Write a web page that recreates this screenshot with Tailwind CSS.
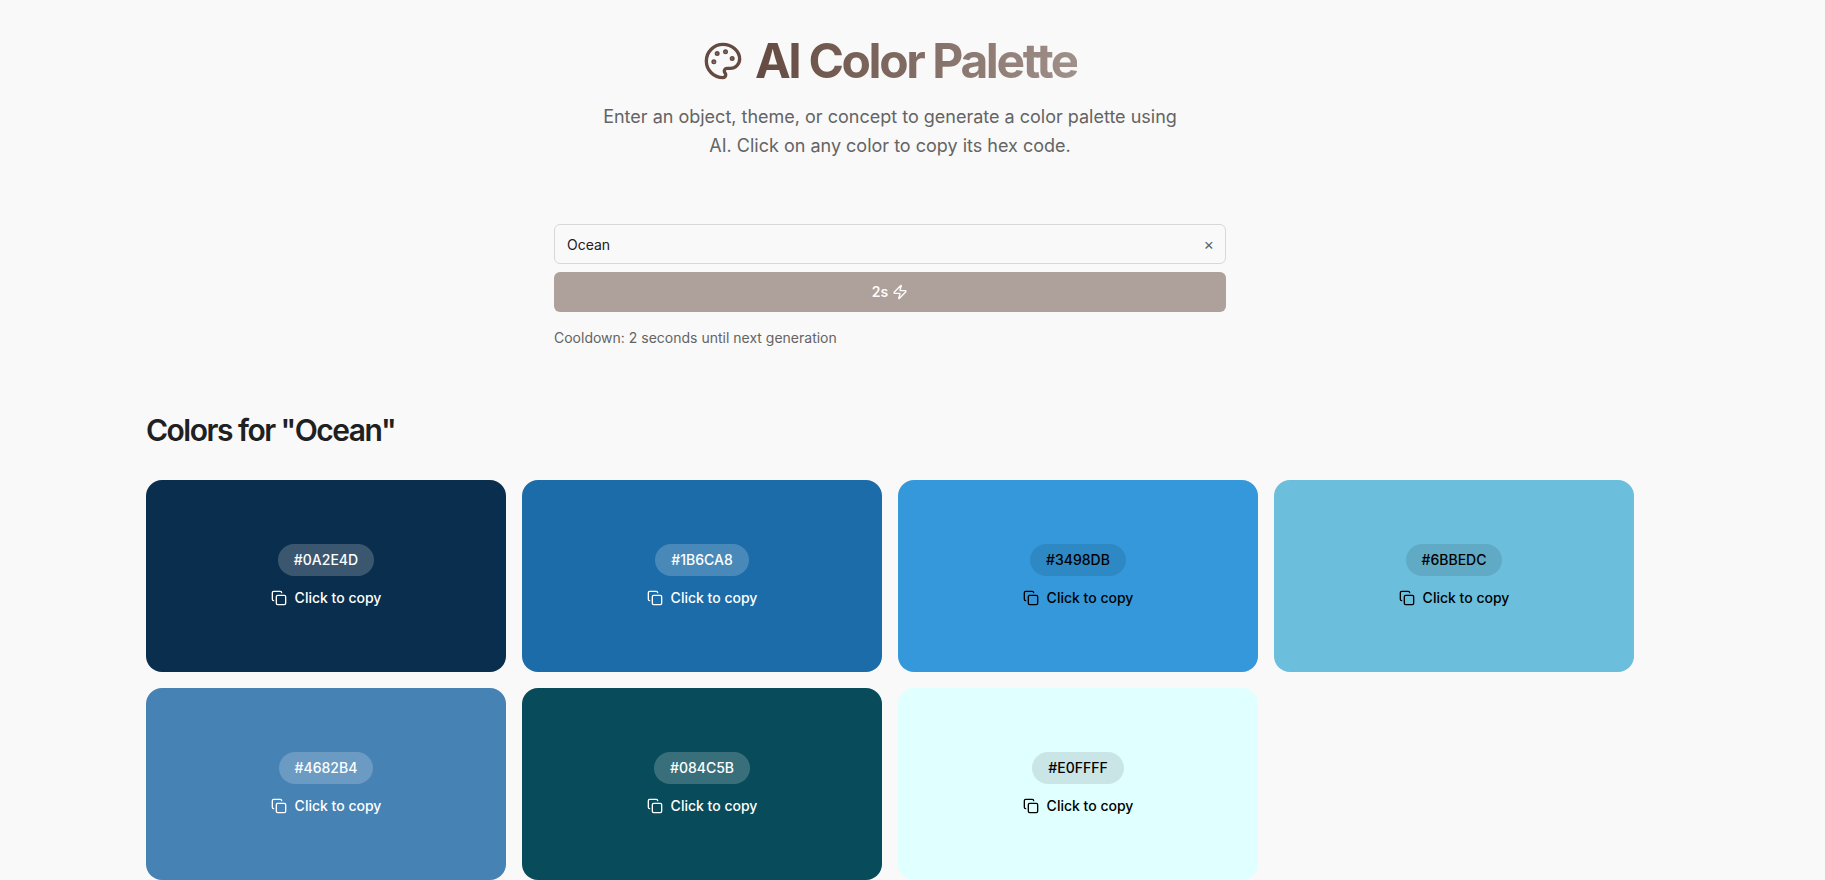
<!DOCTYPE html>
<html lang="en">
<head>
<meta charset="utf-8">
<meta name="viewport" content="width=device-width, initial-scale=1">
<title>AI Color Palette</title>
<script src="https://cdn.jsdelivr.net/npm/@tailwindcss/browser@4"></script>
</head>
<body class="bg-[#f9f9f9] pr-[45px] font-['Inter',sans-serif] text-[#202020]">
<svg class="hidden" aria-hidden="true">
  <symbol id="copy" viewBox="0 0 24 24" fill="none" stroke="currentColor" stroke-width="2" stroke-linecap="round" stroke-linejoin="round"><rect width="14" height="14" x="8" y="8" rx="2" ry="2"/><path d="M4 16c-1.1 0-2-.9-2-2V4c0-1.1.9-2 2-2h10c1.1 0 2 .9 2 2"/></symbol>
</svg>
<main class="mx-auto max-w-[1536px] px-6 pt-8">
  <header class="mx-auto flex flex-col items-center">
    <h1 class="flex items-center gap-3 text-5xl leading-[58px] font-bold tracking-tighter">
      <svg class="size-10 text-[#644a40]" viewBox="0 0 24 24" fill="none" stroke="currentColor" stroke-width="2" stroke-linecap="round" stroke-linejoin="round" aria-hidden="true"><circle cx="13.5" cy="6.5" r=".5" fill="currentColor"/><circle cx="17.5" cy="10.5" r=".5" fill="currentColor"/><circle cx="8.5" cy="7.5" r=".5" fill="currentColor"/><circle cx="6.5" cy="12.5" r=".5" fill="currentColor"/><path d="M12 2C6.5 2 2 6.5 2 12s4.500 10 10 10c.926 0 1.648-.746 1.648-1.688 0-.437-.18-.835-.437-1.125-.29-.289-.438-.652-.438-1.125a1.640 1.640 0 0 1 1.668-1.668h1.996c3.051 0 5.555-2.503 5.555-5.554C21.965 6.012 17.461 2 12 2z"/></svg>
      <span class="bg-linear-to-r from-[#644a40] to-[#644a40]/60 bg-clip-text text-transparent">AI Color Palette</span>
    </h1>
    <p class="mt-3 max-w-[600px] text-center text-lg leading-[29px] text-[#646464]">Enter an object, theme, or concept to generate a color palette using AI. Click on any color to copy its hex code.</p>
  </header>

  <form class="mx-auto mt-16 max-w-2xl text-sm">
    <div class="relative">
      <input type="text" value="Ocean" aria-label="Object, theme, or concept" class="block h-10 w-full rounded-md border border-[#d8d8d8] bg-transparent pr-10 pl-3">
      <button type="button" aria-label="Clear" class="absolute top-0 right-3 h-10 text-base text-[#646464]">×</button>
    </div>
    <button type="submit" class="mt-2 flex h-10 w-full items-center justify-center gap-1 rounded-md bg-[#aea19c] font-semibold text-[#fcfcfc]">2s
      <svg class="size-4" viewBox="0 0 24 24" fill="none" stroke="currentColor" stroke-width="2" stroke-linecap="round" stroke-linejoin="round" aria-hidden="true"><path d="M4 14a1 1 0 0 1-.78-1.630l9.900-10.200a.5.5 0 0 1 .86.460l-1.920 6.020A1 1 0 0 0 13 10h7a1 1 0 0 1 .78 1.630l-9.900 10.200a.5.5 0 0 1-.86-.460l1.920-6.020A1 1 0 0 0 11 14z"/></svg>
    </button>
    <p class="mt-4 text-[#646464]">Cooldown: 2 seconds until next generation</p>
  </form>

  <section class="mt-16">
    <h2 class="text-3xl leading-9 font-semibold tracking-tighter">Colors for "Ocean"</h2>
    <div class="mt-8 grid grid-cols-4 gap-4 text-sm font-medium">
      <button type="button" class="flex h-48 flex-col items-center justify-center gap-3 rounded-2xl bg-[#0a2e4d] text-white">
        <span class="rounded-full bg-white/20 px-4 py-1.5">#0A2E4D</span>
        <span class="flex items-center gap-2"><svg class="size-4" aria-hidden="true"><use href="#copy"/></svg>Click to copy</span>
      </button>
      <button type="button" class="flex h-48 flex-col items-center justify-center gap-3 rounded-2xl bg-[#1b6ca8] text-white">
        <span class="rounded-full bg-white/20 px-4 py-1.5">#1B6CA8</span>
        <span class="flex items-center gap-2"><svg class="size-4" aria-hidden="true"><use href="#copy"/></svg>Click to copy</span>
      </button>
      <button type="button" class="flex h-48 flex-col items-center justify-center gap-3 rounded-2xl bg-[#3498db] text-black">
        <span class="rounded-full bg-black/10 px-4 py-1.5">#3498DB</span>
        <span class="flex items-center gap-2"><svg class="size-4" aria-hidden="true"><use href="#copy"/></svg>Click to copy</span>
      </button>
      <button type="button" class="flex h-48 flex-col items-center justify-center gap-3 rounded-2xl bg-[#6bbedc] text-black">
        <span class="rounded-full bg-black/10 px-4 py-1.5">#6BBEDC</span>
        <span class="flex items-center gap-2"><svg class="size-4" aria-hidden="true"><use href="#copy"/></svg>Click to copy</span>
      </button>
      <button type="button" class="flex h-48 flex-col items-center justify-center gap-3 rounded-2xl bg-[#4682b4] text-white">
        <span class="rounded-full bg-white/20 px-4 py-1.5">#4682B4</span>
        <span class="flex items-center gap-2"><svg class="size-4" aria-hidden="true"><use href="#copy"/></svg>Click to copy</span>
      </button>
      <button type="button" class="flex h-48 flex-col items-center justify-center gap-3 rounded-2xl bg-[#084c5b] text-white">
        <span class="rounded-full bg-white/20 px-4 py-1.5">#084C5B</span>
        <span class="flex items-center gap-2"><svg class="size-4" aria-hidden="true"><use href="#copy"/></svg>Click to copy</span>
      </button>
      <button type="button" class="flex h-48 flex-col items-center justify-center gap-3 rounded-2xl bg-[#e0ffff] text-black">
        <span class="rounded-full bg-black/10 px-4 py-1.5">#E0FFFF</span>
        <span class="flex items-center gap-2"><svg class="size-4" aria-hidden="true"><use href="#copy"/></svg>Click to copy</span>
      </button>
    </div>
  </section>
</main>
</body>
</html>
